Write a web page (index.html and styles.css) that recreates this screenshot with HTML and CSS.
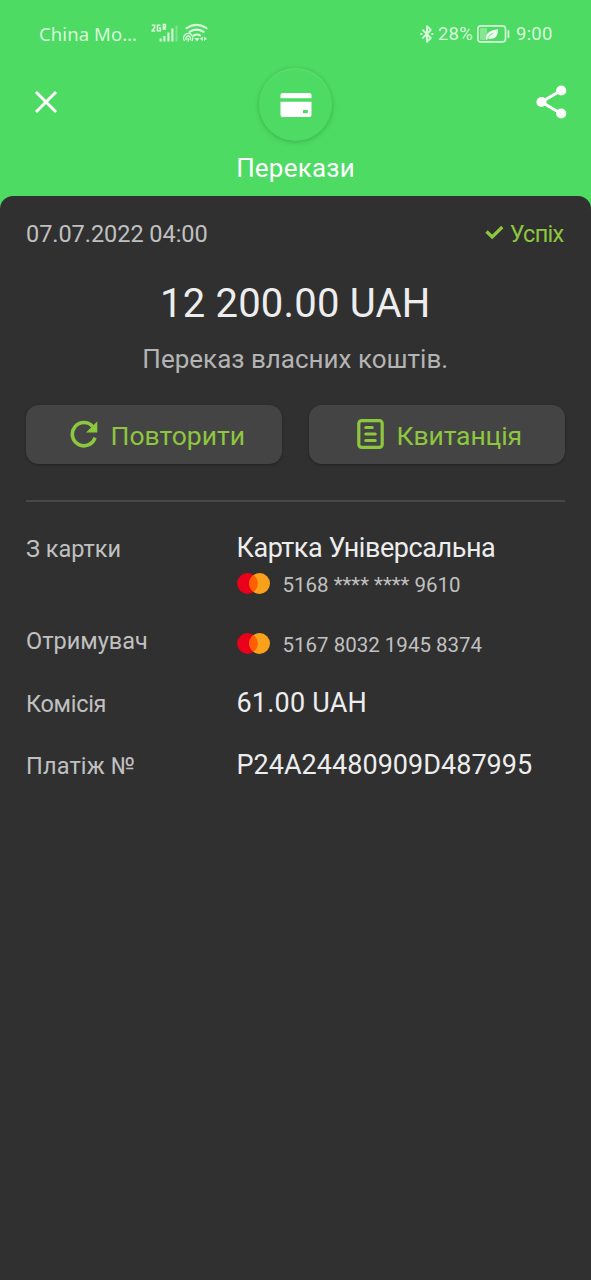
FILE: index.html
```html
<!DOCTYPE html>
<html lang="uk">
<head>
<meta charset="utf-8">
<title>Перекази</title>
<link rel="stylesheet" href="styles.css">
</head>
<body>
<header class="header">
  <div class="status">
    <span class="carrier">China Mo…</span>
    <svg class="signals" width="58" height="20" viewBox="0 0 58 20" fill="none" stroke="#d9f9dd">
      <g stroke-width="1.5">
        <path d="M.8 2.200h2.800v2.600L1.200 7.400v.6h3M9.400 2.200H6.400v5.600h3V5H8M12.400 7V1.600h2v2.400h-2M13.400 4l1.200 3"/>
      </g>
      <g stroke-width="2.100">
        <path d="M9.600 15.500v3M13.400 13v5.500M17.400 9.500v9M21.400 5.500v13"/>
        <path d="M25.500 2.500v16" opacity=".35"/>
      </g>
      <g stroke-width="2.100" stroke-linecap="round">
        <path d="M35.500 5.200q10-6.600 20 0M38.600 8.800q7-4.400 14 0M43 12.400q3-1.800 6 0"/>
      </g>
      <g stroke-width="1.400">
        <path d="M33.700 18a4.600 4.600 0 1 1 7 0M35.600 17a2.300 2.300 0 1 1 3.200 0M37.200 15v3.500"/>
      </g>
      <path d="M43.500 15h5l-2.500 3.500zM51.800 13.400v4.800l-2.800-2.400zM53 13.400v4.800l2.800-2.400z" fill="#d9f9dd" stroke="none"/>
    </svg>
    <div class="status-right">
      <svg width="14" height="20" viewBox="0 0 14 20" fill="none" stroke="#d9f9dd" stroke-width="1.900" stroke-linejoin="round">
        <path d="M2.400 5.600l8.400 8.400L7 17.800V2.200L10.800 6l-8.400 8.400"/>
        <path d="M.4 10h2M11.400 10h2"/>
      </svg>
      <span class="percent">28%</span>
      <svg width="33" height="18" viewBox="0 0 33 18">
        <rect x=".9" y=".9" width="27.600" height="16" rx="3" fill="none" stroke="#d9f9dd" stroke-width="1.600"/>
        <rect x="3" y="3" width="7" height="12" rx="1" fill="#d9f9dd" opacity=".4"/>
        <path d="M31.400 6v6" stroke="#d9f9dd" stroke-width="1.800" stroke-linecap="round"/>
        <path d="M9.200 14.500q-1.600-8.500 11.800-10.300.4 9.800-7.400 9.600-1.600 0-2.600-.6L9.800 15z" fill="#f2fdf3"/>
        <path d="M10.800 12.800Q13 9.600 16.500 8" fill="none" stroke="#4ddb63" stroke-width=".8"/>
      </svg>
      <span class="clock">9:00</span>
    </div>
  </div>
  <div class="toolbar">
    <svg class="close" width="24" height="24" viewBox="0 0 24 24" fill="none" stroke="#fff" stroke-width="3">
      <path d="M2 2l20 20M22 2L2 22"/>
    </svg>
    <div class="badge">
      <svg width="32" height="24" viewBox="0 0 32 24">
        <path d="M2.500 0h27Q31.500 0 31.500 2.200V5.200H.5V2.200Q.5 0 2.500 0z" fill="#fff"/>
        <path fill-rule="evenodd" d="M.5 8.800h31v13q0 2.200-2 2.200h-27q-2 0-2-2.200zM23 17v3.200h4.800V17z" fill="#fff"/>
      </svg>
    </div>
    <svg class="share" width="31" height="34" viewBox="0 0 31 34">
      <path d="M25 5.500L5.500 17 25 28.500" fill="none" stroke="#fff" stroke-width="3"/>
      <g fill="#fff"><circle cx="25.200" cy="5.500" r="5.100"/><circle cx="5.500" cy="17" r="5.100"/><circle cx="25.200" cy="28.500" r="5.100"/></g>
    </svg>
  </div>
  <h1 class="title">Перекази</h1>
</header>
<main class="sheet">
  <div class="meta">
    <span class="date">07.07.2022 04:00</span>
    <span class="success">
      <svg width="19" height="15" viewBox="0 0 19 15" fill="none" stroke="#8dc63f" stroke-width="3.200"><path d="M1.500 6.500L7.200 12 17.300 2"/></svg>
      <span class="success-text">Успіх</span>
    </span>
  </div>
  <div class="amount">12 200.00 UAH</div>
  <div class="purpose">Переказ власних коштів.</div>
  <div class="actions">
    <div class="button repeat">
      <svg width="28" height="28" viewBox="0 0 28 28">
        <path d="M22.800 6.700A11.600 11.600 0 1 0 25 17.600" fill="none" stroke="#8dc63f" stroke-width="3.600"/>
        <path d="M27.300 1.200v11.300H16z" fill="#8dc63f"/>
      </svg>
      <span>Повторити</span>
    </div>
    <div class="button receipt">
      <svg width="27" height="30" viewBox="0 0 27 30" fill="none" stroke="#8dc63f" stroke-width="3.200">
        <rect x="1.800" y="1.600" width="23.400" height="26.800" rx="3"/>
        <path d="M8.800 8.500h6.400M8.800 15h9.400M8.800 21.500h9.400" stroke-linecap="round"/>
      </svg>
      <span>Квитанція</span>
    </div>
  </div>
  <div class="details">
    <div class="row source">
      <div class="label">З картки</div>
      <div>
        <div class="value card-name">Картка Універсальна</div>
        <div class="card">
          <svg class="mastercard" width="33" height="21" viewBox="0 0 33 21">
            <circle cx="10.500" cy="10.500" r="10.400" fill="#eb001b"/><circle cx="22.600" cy="10.500" r="10.400" fill="#f9a11b"/>
            <path d="M16.550 2.100a10.400 10.400 0 0 1 0 16.800a10.400 10.400 0 0 1 0-16.800z" fill="#ff5f00"/>
          </svg>
          <span>5168 **** **** 9610</span>
        </div>
      </div>
    </div>
    <div class="row recipient">
      <div class="label">Отримувач</div>
      <div class="card">
        <svg class="mastercard" width="33" height="21" viewBox="0 0 33 21">
          <circle cx="10.500" cy="10.500" r="10.400" fill="#eb001b"/><circle cx="22.600" cy="10.500" r="10.400" fill="#f9a11b"/>
          <path d="M16.550 2.100a10.400 10.400 0 0 1 0 16.800a10.400 10.400 0 0 1 0-16.800z" fill="#ff5f00"/>
        </svg>
        <span>5167 8032 1945 8374</span>
      </div>
    </div>
    <div class="row fee">
      <div class="label fee-label">Комісія</div>
      <div class="value fee-value">61.00 UAH</div>
    </div>
    <div class="row">
      <div class="label number-label">Платіж №</div>
      <div class="value">P24A24480909D487995</div>
    </div>
  </div>
</main>
</body>
</html>
```
FILE: styles.css
```css
* { box-sizing: border-box; }
body {
  margin: 0;
  min-height: 1280px;
  display: flex;
  flex-direction: column;
  background: #4ddb63;
  font-family: Roboto, "Noto Sans", sans-serif;
  white-space: nowrap;
}
svg { display: block; flex: none; }

.header { height: 196px; }
.status {
  height: 68px;
  padding: 0 38px 0 39px;
  display: flex;
  align-items: center;
  color: #d9f9dd;
  font-size: 18.5px;
}
.carrier { width: 112px; padding-bottom: 1px; font-family: "Noto Sans", sans-serif; letter-spacing: 0.1px; line-height: 24px; }
.signals { margin-top: -2px; }
.status-right { margin-left: auto; display: flex; align-items: center; }
.percent { width: 43px; padding-left: 4px; letter-spacing: 0.2px; }
.clock { margin-left: 6px; width: 37px; letter-spacing: 0.24px; }
.toolbar {
  height: 72px;
  padding: 0 24px 0 34px;
  display: grid;
  grid-template-columns: 225px 73px 1fr;
}
.close { margin-top: 22px; }
.badge {
  width: 73px;
  height: 73px;
  border-radius: 50%;
  display: grid;
  place-items: center;
  background: #4ddb63;
  box-shadow: 0 1px 5px rgba(0, 70, 10, 0.28), inset 0 1px 1px rgba(255, 255, 255, 0.12);
}
.badge svg { margin-top: 1px; }
.share { justify-self: end; margin-top: 17px; }
.title {
  margin: 8px 0 0;
  text-align: center;
  font-size: 26px;
  font-weight: 400;
  line-height: 40px;
  letter-spacing: 0.2px;
  color: #fff;
}

.sheet {
  flex: 1;
  padding: 24px 26.500px 0 26px;
  border-radius: 13px 13px 0 0;
  background: #303030;
  color: #c0c0c0;
}
.meta { display: flex; justify-content: space-between; font-size: 23.5px; line-height: 28px; }
.date { letter-spacing: -0.05px; }
.success { display: flex; align-items: center; gap: 6px; color: #8dc63f; font-size: 23.5px; }
.success svg { margin-top: -3px; }
.success-text { padding-right: 1px; letter-spacing: -0.7px; }
.amount {
  margin-top: 32px;
  text-align: center;
  font-size: 40px;
  line-height: 48px;
  letter-spacing: 0.2px;
  color: #ededed;
}
.purpose { margin-top: 15px; text-align: center; font-size: 26px; line-height: 32px; color: #b4b4b4; }

.actions { margin-top: 30px; display: grid; grid-template-columns: 1fr 1fr; gap: 26.500px; }
.button {
  height: 59px;
  padding-left: 44px;
  display: flex;
  align-items: center;
  gap: 12.500px;
  border-radius: 13px;
  background: #444;
  box-shadow: 0 1px 3px rgba(0, 0, 0, 0.3);
  color: #8dc63f;
  font-size: 26.5px;
}
.button svg { margin-top: -1px; }
.button span { margin-top: 2px; }
.receipt { padding-left: 48.500px; }
.receipt span { letter-spacing: -0.11px; }

.details { margin-top: 36px; padding-top: 30px; border-top: 2px solid #474747; }
.row { display: grid; grid-template-columns: 210.500px 1fr; }
.source { margin-bottom: 25px; }
.recipient { margin-bottom: 28px; }
.fee { margin-bottom: 29px; }
.label { padding-top: 1px; font-size: 23.5px; line-height: 32px; }
.value { font-size: 27px; line-height: 32px; letter-spacing: 0.03px; color: #ededed; }
.card-name { letter-spacing: -0.44px; }
.card { margin-top: 7px; display: flex; align-items: center; gap: 13px; font-size: 20.5px; line-height: 28px; }
.mastercard { margin-top: -3px; }
.fee-label { letter-spacing: -0.3px; }
.fee-value { letter-spacing: 0.2px; }
.number-label { letter-spacing: 0.15px; }
```
